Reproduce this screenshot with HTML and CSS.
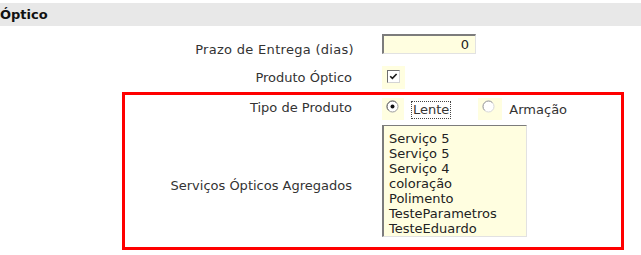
FILE: index.html
```html
<!DOCTYPE html>
<html>
<head>
	<title>Óptico</title>
	<link rel="stylesheet" href="styles.css">
</head>
<body>
	<div class="section-title">Óptico</div>

	<div class="form-row row-prazo">
		<label class="form-label" for="prazo">Prazo de Entrega (dias)</label>
		<div class="form-field">
			<input type="text" id="prazo" class="num-input" value="0">
		</div>
	</div>

	<div class="form-row row-produto">
		<label class="form-label">Produto Óptico</label>
		<div class="form-field">
			<span class="check-wrap">
				<span class="check-box">
					<svg width="9" height="9" viewBox="0 0 9 9"><path d="M1.2 4.2 L3.4 6.4 L7.6 2" fill="none" stroke="#1a1a1a" stroke-width="1.6"/></svg>
				</span>
			</span>
		</div>
	</div>

	<div class="highlight-box">
		<div class="form-row row-tipo">
			<label class="form-label">Tipo de Produto</label>
			<div class="form-field radio-group">
				<span class="radio-wrap">
					<svg width="13" height="13" viewBox="0 0 13 13">
						<circle cx="6.5" cy="6.5" r="5.5" fill="#fff" stroke="#9a9a9a"/>
						<path d="M2.6 10.4 A5.5 5.5 0 0 1 10.4 2.6" fill="none" stroke="#6e6e6e"/>
						<circle cx="6.5" cy="6.5" r="2" fill="#111"/>
					</svg>
				</span>
				<span class="radio-text focused">Lente</span>
				<span class="radio-wrap second">
					<svg width="13" height="13" viewBox="0 0 13 13">
						<circle cx="6.5" cy="6.5" r="5.5" fill="#fff" stroke="#d8d8d8"/>
						<path d="M2.6 10.4 A5.5 5.5 0 0 1 10.4 2.6" fill="none" stroke="#a0a0a0"/>
					</svg>
				</span>
				<span class="radio-text second">Armação</span>
			</div>
		</div>

		<div class="form-row row-servicos">
			<label class="form-label">Serviços Ópticos Agregados</label>
			<div class="form-field">
				<div class="listbox">
					<div>Serviço 5</div>
					<div>Serviço 5</div>
					<div>Serviço 4</div>
					<div>coloração</div>
					<div>Polimento</div>
					<div>TesteParametros</div>
					<div>TesteEduardo</div>
				</div>
			</div>
		</div>
	</div>
</body>
</html>
```

FILE: styles.css
```css
body {
	margin: 0;
	font-family: "DejaVu Sans", Verdana, sans-serif;
	font-size: 13px;
	line-height: 15px;
	color: #333;
	background-color: #fff;
}

.section-title {
	margin-top: 3px;
	height: 23px;
	line-height: 23px;
	background-color: #e8e8e8;
	font-weight: bold;
	color: #111;
}

.form-row {
	display: flex;
}

.form-label {
	width: 354px;
	text-align: right;
}

.form-field {
	margin-left: 28px;
}

/* prazo */
.row-prazo {
	padding-top: 8px;
}

.row-prazo .form-label {
	padding-top: 8px;
	letter-spacing: 0.3px;
}

.num-input {
	box-sizing: border-box;
	width: 94px;
	height: 20px;
	margin: 0;
	padding: 0 6px 0 0;
	border-style: solid;
	border-width: 2px 1px 1px 2px;
	border-color: #7c7c7c #e2e2e2 #e2e2e2 #7c7c7c;
	background-color: #fffee0;
	font-family: "DejaVu Sans", Verdana, sans-serif;
	font-size: 13px;
	color: #222;
	text-align: right;
	outline: none;
}

/* produto */
.row-produto {
	padding-top: 9px;
}

.row-produto .form-label {
	width: 352px;
	padding-top: 4px;
}

.row-produto .form-field {
	margin-left: 30px;
}

.check-wrap {
	display: block;
	box-sizing: border-box;
	width: 23px;
	height: 23px;
	padding: 4px 0 0 5px;
	background-color: #fffee0;
}

.check-box {
	display: flex;
	align-items: center;
	justify-content: center;
	box-sizing: border-box;
	width: 13px;
	height: 13px;
	border-style: solid;
	border-width: 1px;
	border-color: #6f6f6f #d4d4d4 #d4d4d4 #6f6f6f;
	background-color: #fff;
}

/* red box */
.highlight-box {
	margin: 3px 0 0 122px;
	width: 496px;
	border: 3px solid #ff0000;
	padding-bottom: 10px;
}

.highlight-box .form-label {
	width: 227px;
}

.highlight-box .form-field {
	margin-left: 30px;
}

.row-tipo {
	padding-top: 3px;
}

.row-tipo .form-label {
	padding-top: 2px;
}

.radio-group {
	display: flex;
	align-items: flex-start;
}

.radio-wrap {
	display: block;
	box-sizing: border-box;
	width: 22px;
	height: 22px;
	padding: 2px 0 0 4px;
	background-color: #fffee0;
}

.radio-wrap.second {
	width: 24px;
	margin-left: 27px;
}

.radio-text {
	display: block;
	margin-left: 7px;
	margin-top: 3px;
	padding: 0 1px 1px 1px;
	border: 1px solid transparent;
	color: #333;
}

.radio-text.second {
	margin-left: 5px;
}

.radio-text.focused {
	border: 1px dotted #444;
}

.row-servicos {
	padding-top: 5px;
}

.row-servicos .form-label {
	align-self: center;
	padding-top: 8px;
}

.listbox {
	box-sizing: border-box;
	width: 145px;
	height: 112px;
	padding: 5px 0 0 5px;
	border-style: solid;
	border-width: 1px 1px 1px 2px;
	border-color: #7c7c7c #e2e2e2 #e2e2e2 #7c7c7c;
	background-color: #fffee0;
	color: #222;
}
```
